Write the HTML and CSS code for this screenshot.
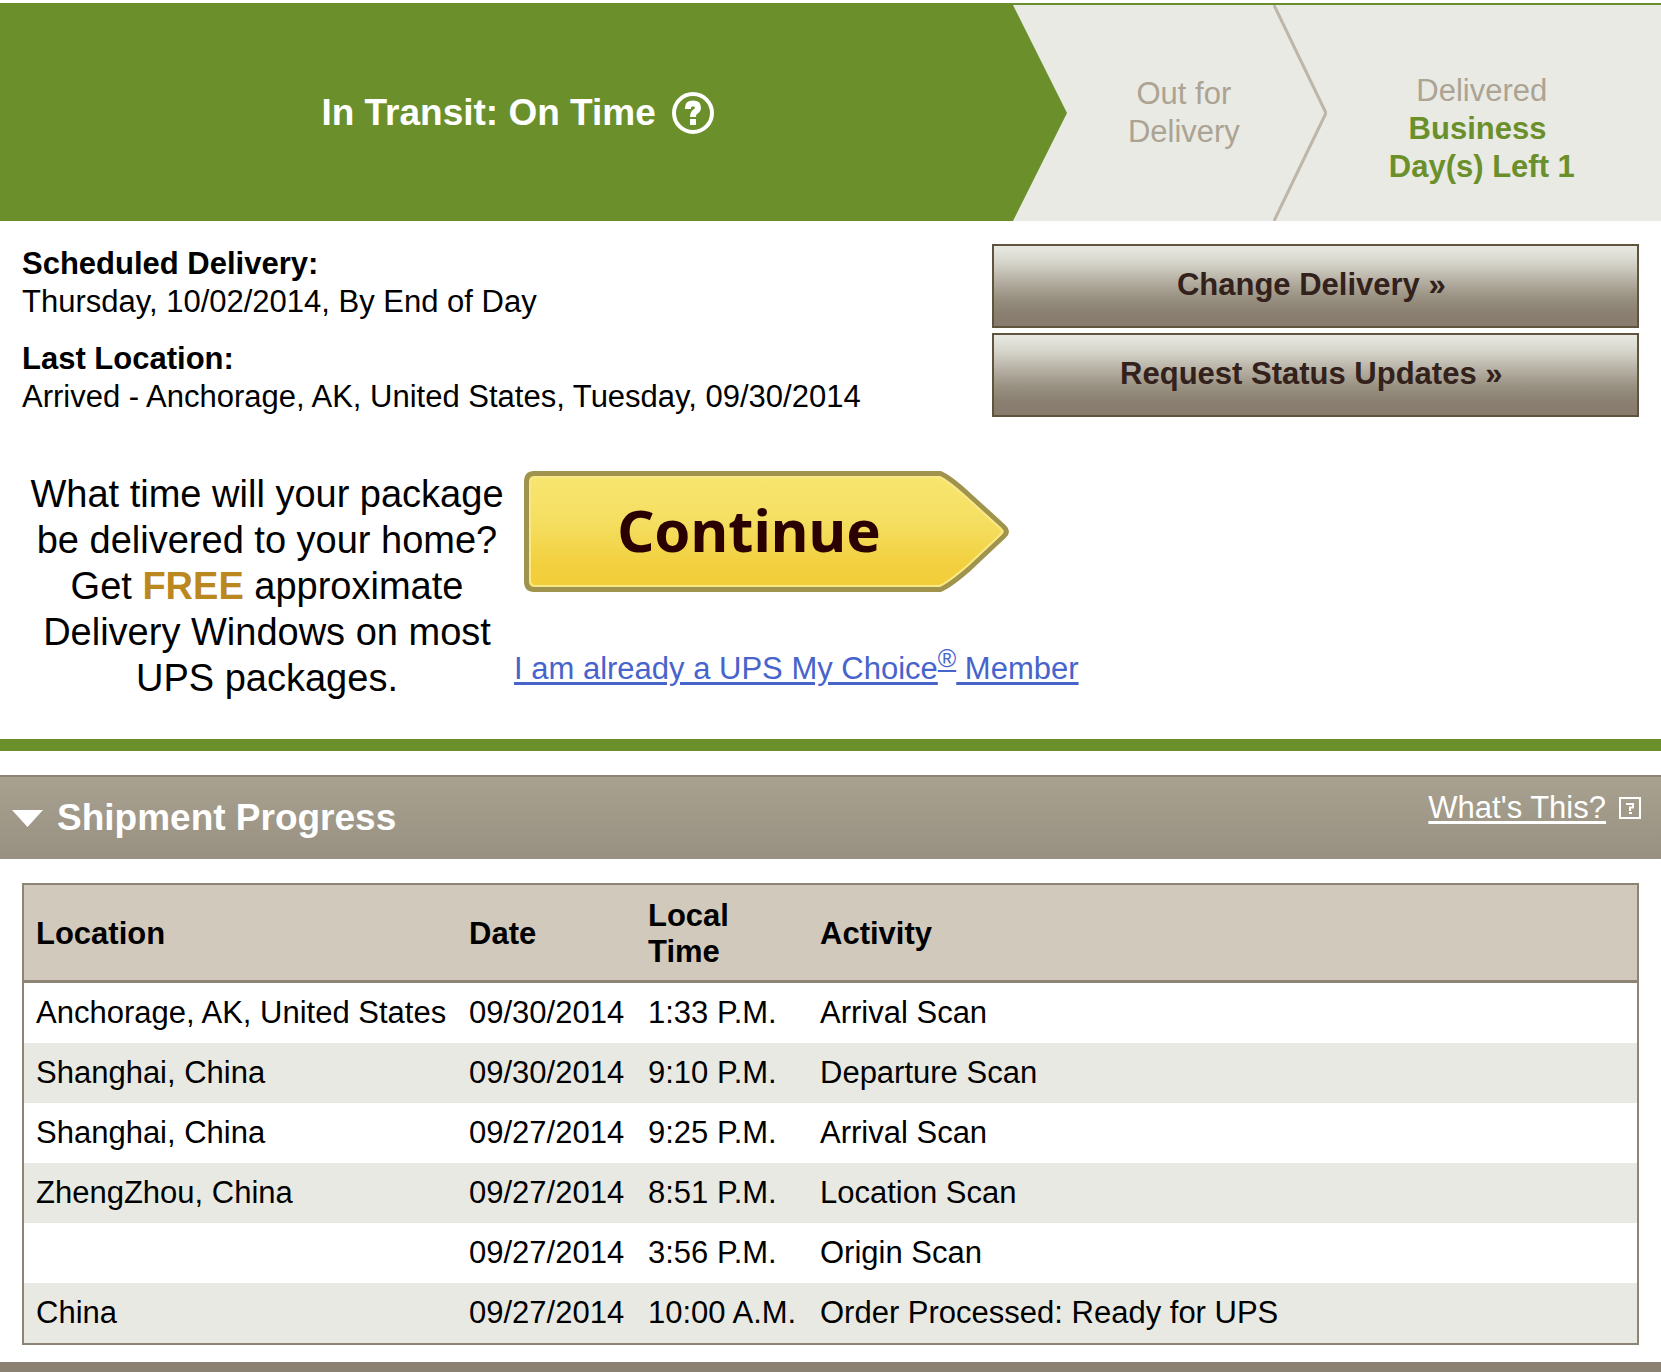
FILE: index.html
```html
<!DOCTYPE html>
<html lang="en">
<head>
  <meta charset="UTF-8">
  <meta name="viewport" content="width=device-width, initial-scale=1.0">
  <title>Tracking Detail</title>
  <link rel="stylesheet" href="styles.css">
</head>
<body>
  <!-- Delivery status steps -->
  <div class="status">
    <div class="step step-current">
      <h1>In Transit: On Time</h1>
      <a href="#status-help" class="help" aria-label="Status help">
        <svg width="42" height="42" viewBox="0 0 42 42">
          <circle cx="21" cy="21" r="19" fill="none" stroke="#fff" stroke-width="4"/>
          <path d="M16 17V15.500Q16 11.500 21 11.500T26 15.500Q26 18 23.500 19.500Q21 21 21 25" fill="none" stroke="#fff" stroke-width="6"/>
          <rect x="18" y="27" width="6" height="6" fill="#fff"/>
        </svg>
      </a>
    </div>
    <svg class="arrow" viewBox="0 0 54 216" preserveAspectRatio="none">
      <path d="M0 0L54 108L0 216Z" fill="#6b902b"/>
    </svg>
    <div class="step step-out">Out for<br>Delivery</div>
    <svg class="arrow" viewBox="0 0 54 216" preserveAspectRatio="none">
      <path d="M1 0L53 108L1 216" fill="none" stroke="#bdb6a9" stroke-width="3"/>
    </svg>
    <div class="step step-delivered">
      <p>Delivered</p>
      <p class="days-left">Business&nbsp;<br>Day(s) Left 1</p>
    </div>
  </div>

  <div class="summary">
    <dl class="details">
      <dt>Scheduled Delivery:</dt>
      <dd>Thursday, 10/02/2014, By End of Day</dd>
      <dt>Last Location:</dt>
      <dd>Arrived - Anchorage, AK, United States, Tuesday, 09/30/2014</dd>
    </dl>
    <div class="actions">
      <button type="button">Change Delivery »&nbsp;</button>
      <button type="button">Request Status Updates »&nbsp;</button>
    </div>
  </div>

  <!-- My Choice promo -->
  <div class="promo">
    <p class="promo-text">What time will your package<br>be delivered to your home?<br>Get <strong>FREE</strong> approximate<br>Delivery Windows on most<br>UPS packages.</p>
    <div class="promo-links">
      <button type="button" class="continue">
        <svg viewBox="0 0 486 121" aria-hidden="true">
          <defs>
            <linearGradient id="gold" x1="0" y1="0" x2="0" y2="1">
              <stop offset="0" stop-color="#f8e670"/>
              <stop offset="0.4" stop-color="#f5df62"/>
              <stop offset="0.8" stop-color="#f2cf3d"/>
              <stop offset="1" stop-color="#f2ce3a"/>
            </linearGradient>
          </defs>
          <path d="M10 2.500H416Q424 5 446 25L480 56Q485 60.500 480 65L446 97Q424 116 416 118.500H10Q2.500 118.500 2.500 110V11Q2.500 2.500 10 2.500Z" fill="url(#gold)" stroke="#9f934e" stroke-width="5"/>
          <path d="M12 6H415Q422 8 443 27L476 57Q480 60.500 476 64L443 95Q422 113 415 115H12Q6 115 6 109V12Q6 6 12 6Z" fill="none" stroke="#f8e886" stroke-width="2"/>
        </svg>
        <span>Continue</span>
      </button>
      <a href="#member">I am already a UPS My Choice<sup>®</sup> Member</a>
    </div>
  </div>

  <!-- Shipment progress -->
  <div class="section-header">
    <svg width="31" height="17" viewBox="0 0 31 17">
      <path d="M0 0H31L15.500 17Z" fill="#fff"/>
    </svg>
    <h2>Shipment Progress</h2>
    <div class="whats-this">
      <a href="#whats-this">What's This?</a>
      <svg width="22" height="22" viewBox="0 0 22 22">
        <rect x="1" y="1" width="20" height="20" fill="none" stroke="#fff" stroke-width="2"/>
        <path d="M7 7H14V10.500H11V14" fill="none" stroke="#fff" stroke-width="2"/>
        <rect x="10" y="15" width="3" height="2" fill="#fff"/>
      </svg>
    </div>
  </div>

  <div class="progress">
    <table>
      <thead>
        <tr>
          <th class="col-location">Location</th>
          <th class="col-date">Date</th>
          <th class="col-time">Local<br>Time</th>
          <th>Activity</th>
        </tr>
      </thead>
      <tbody>
        <tr><td>Anchorage, AK, United States</td><td>09/30/2014</td><td>1:33 P.M.</td><td>Arrival Scan</td></tr>
        <tr><td>Shanghai, China</td><td>09/30/2014</td><td>9:10 P.M.</td><td>Departure Scan</td></tr>
        <tr><td>Shanghai, China</td><td>09/27/2014</td><td>9:25 P.M.</td><td>Arrival Scan</td></tr>
        <tr><td>ZhengZhou, China</td><td>09/27/2014</td><td>8:51 P.M.</td><td>Location Scan</td></tr>
        <tr><td></td><td>09/27/2014</td><td>3:56 P.M.</td><td>Origin Scan</td></tr>
        <tr><td>China</td><td>09/27/2014</td><td>10:00 A.M.</td><td>Order Processed: Ready for UPS</td></tr>
      </tbody>
    </table>
  </div>
  <div class="bottom-bar"></div>
</body>
</html>
```
FILE: styles.css
```css
/* Base Reset */
body, h1, h2, p, dl, dd {
  margin: 0;
  padding: 0;
}

* {
  box-sizing: border-box;
}

body {
  font-family: "Liberation Sans", Arial, sans-serif;
  font-size: 31px;
  line-height: 38px;
  color: #000;
  background: #fff;
  padding-top: 3px;
}

h1, h2 {
  font-size: 37px;
  line-height: 42px;
  color: #fff;
}

/* Status steps */
.status {
  display: flex;
  min-height: 218px;
  border-top: 2px solid #6b902b;
  background: #e9eae4;
  color: #aca393;
  text-align: center;
}

.step {
  display: flex;
  flex-direction: column;
  justify-content: center;
}

.step-current {
  flex-direction: row;
  align-items: center;
  gap: 16px;
  width: 61%;
  padding-left: 22px;
  background: #6b902b;
}

.step-out {
  flex: 4;
  padding-left: 28px;
}

.step-delivered {
  flex: 7;
  padding: 32px 24px 0 0;
}

.arrow {
  width: 54px;
  flex: none;
}

.help {
  display: flex;
}

.days-left {
  font-weight: bold;
  color: #6b902b;
}

/* Delivery details */
.summary {
  display: flex;
  justify-content: space-between;
  padding: 23px 22px 0;
}

.details {
  padding-top: 1px;
}

dt {
  font-weight: bold;
}

dd + dt {
  margin-top: 19px;
}

.actions {
  display: flex;
  flex-direction: column;
  gap: 5px;
  width: 40%;
}

.actions button {
  height: 84px;
  padding: 0 0 2px;
  border: 2px solid #5f553f;
  background: linear-gradient(#e8e9e4, #d9d8ce 18%, #b8b2a6 42%, #989080 65%, #897e6f 85%, #877c6d);
  color: #33211c;
  font: bold 31px "Liberation Sans", Arial, sans-serif;
  cursor: pointer;
}

/* Promo */
.promo {
  display: flex;
  padding: 54px 22px 38px;
  border-bottom: 12px solid #6b902b;
}

.promo-text {
  width: 490px;
  font-size: 38px;
  line-height: 46px;
  text-align: center;
}

.promo-text strong {
  color: #bb8820;
}

.promo-links {
  display: flex;
  flex-direction: column;
  align-items: flex-start;
  gap: 58px;
  padding-left: 2px;
}

.promo-links a {
  color: #4763cc;
  text-underline-offset: 3px;
}

.promo-links sup {
  display: inline-block;
  font-size: 25px;
  line-height: 0;
  vertical-align: 12px;
  text-decoration: underline;
}

.continue {
  position: relative;
  width: 486px;
  height: 121px;
  margin-left: 10px;
  padding: 0 36px 4px 0;
  border: none;
  background: none;
  color: #2b0000;
  font: bold 58px "Noto Sans", "Open Sans", sans-serif;
  cursor: pointer;
}

.continue svg {
  position: absolute;
  inset: 0;
}

.continue span {
  position: relative;
}

/* Section header */
.section-header {
  display: flex;
  align-items: center;
  gap: 14px;
  height: 84px;
  margin-top: 24px;
  padding: 0 20px 0 12px;
  border-top: 2px solid #8d8475;
  background: linear-gradient(#a8a190, #989080);
}

.whats-this {
  display: flex;
  align-items: center;
  gap: 13px;
  margin-left: auto;
  padding-bottom: 20px;
}

.whats-this a {
  color: #fff;
  text-underline-offset: 3px;
}

/* Progress table */
.progress {
  padding: 24px 22px 17px;
}

table {
  width: 100%;
  border: 2px solid #8d8475;
  border-spacing: 0;
  line-height: 36px;
}

th, td {
  height: 60px;
  padding: 0 8px 0 12px;
  text-align: left;
  white-space: nowrap;
}

th {
  height: 98px;
  padding-top: 2px;
  background: #d1cabc;
  border-bottom: 3px solid #8d8475;
}

tbody tr:nth-child(even) {
  background: #e8e9e3;
}

.col-location {
  width: 433px;
}

.col-date {
  width: 179px;
}

.col-time {
  width: 172px;
}

.bottom-bar {
  height: 10px;
  background: #8a8172;
}
```
